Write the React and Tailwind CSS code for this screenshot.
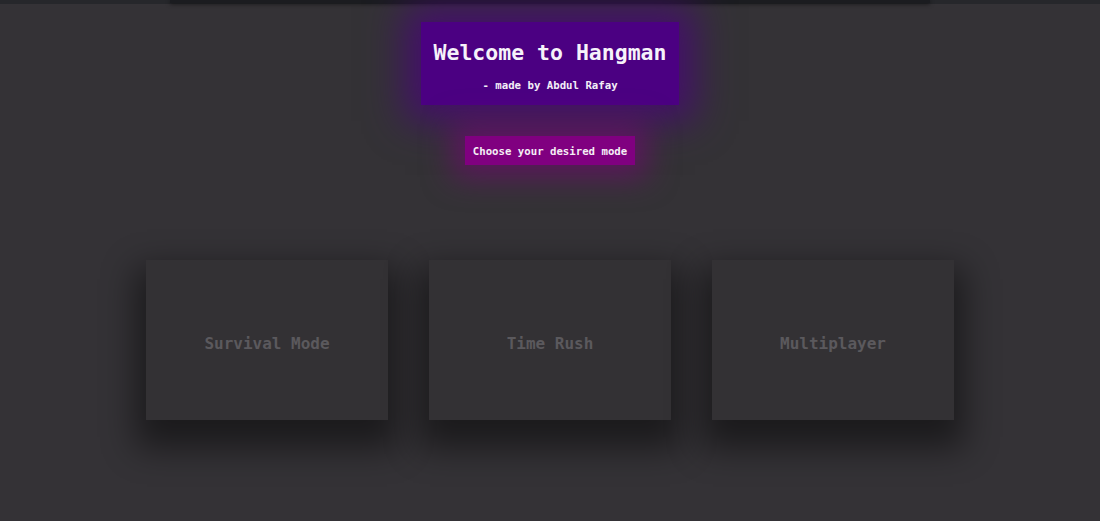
import React from "react";

const mono = { fontFamily: '"DejaVu Sans Mono", "Liberation Mono", monospace' };

function ModeCard({ label }) {
  return (
    <div className="w-[242px] h-[160px] bg-[#333134] flex items-center justify-center pt-[8px] shadow-[0_18px_32px_10px_rgba(0,0,0,0.48)]">
      <span className="text-[16px] font-bold text-[#5b595d]" style={mono}>
        {label}
      </span>
    </div>
  );
}

export default function App() {
  return (
    <div className="w-full min-h-[521px] bg-[#343236] flex flex-col items-center" style={mono}>
      {/* header strip */}
      <div className="w-full h-[4px] bg-[#26272b] flex justify-center">
        <div className="w-[760px] h-[3px] bg-[#1b1c20] shadow-[0_1px_4px_rgba(0,0,0,0.6)]" />
      </div>

      <div className="mt-[18px] w-[258px] h-[83px] bg-[#4b0082] flex flex-col items-center pt-[16px] shadow-[0_0_36px_16px_rgba(75,0,130,0.7)]">
        <h1 className="h-[30px] leading-[30px] text-[21.5px] font-bold text-[#f6f2fa]">
          Welcome to Hangman
        </h1>
        <p className="mt-[10px] h-[16px] leading-[16px] text-[10.7px] font-bold text-[#f3eef8]">
          - made by Abdul Rafay
        </p>
      </div>

      <div className="mt-[31px] h-[29px] px-2 pt-[3px] bg-[#800080] flex items-center text-[10.7px] font-bold text-[#f5eef5] shadow-[0_0_30px_12px_rgba(128,0,128,0.55)]">
        Choose your desired mode
      </div>

      <div className="mt-[95px] flex gap-[41px]">
        <ModeCard label="Survival Mode" />
        <ModeCard label="Time Rush" />
        <ModeCard label="Multiplayer" />
      </div>
    </div>
  );
}
